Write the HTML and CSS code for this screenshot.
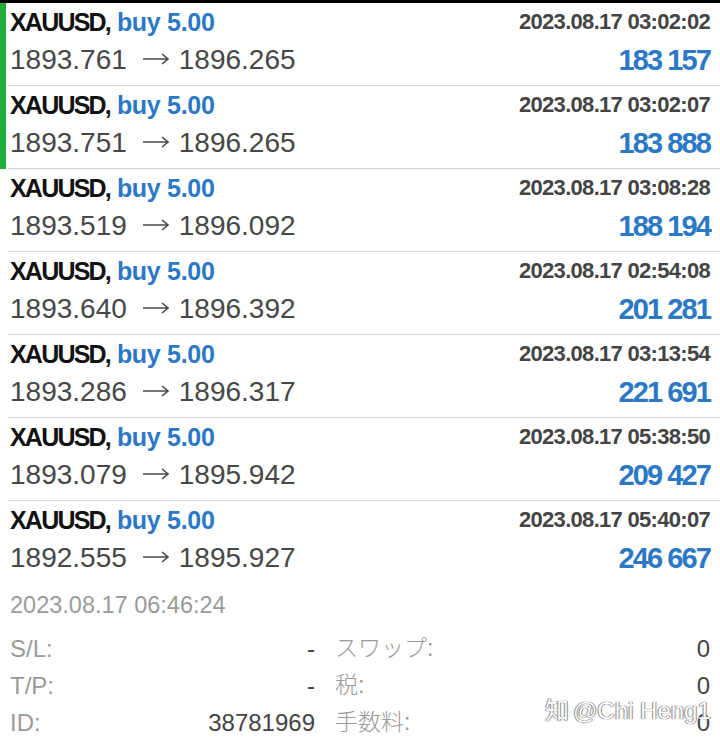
FILE: index.html
```html
<!DOCTYPE html>
<html lang="ja">
<head>
<meta charset="utf-8">
<title>XAUUSD history</title>
<link rel="stylesheet" href="styles.css">
</head>
<body>
<div class="topbar"></div>
<main class="trades">
  <div class="trade active">
    <div class="mark"></div>
    <div class="body">
      <div class="title"><span class="sym">XAUUSD,</span> <span class="side">buy 5.00</span></div>
      <div class="time">2023.08.17 03:02:02</div>
      <div class="prices">1893.761<svg class="arrow" viewBox="0 0 27 14" width="27" height="14"><path d="M1 7H26M20 2L26 7L20 12"/></svg>1896.265</div>
      <div class="profit">183 157</div>
    </div>
  </div>
  <div class="trade active">
    <div class="mark"></div>
    <div class="body">
      <div class="title"><span class="sym">XAUUSD,</span> <span class="side">buy 5.00</span></div>
      <div class="time">2023.08.17 03:02:07</div>
      <div class="prices">1893.751<svg class="arrow" viewBox="0 0 27 14" width="27" height="14"><path d="M1 7H26M20 2L26 7L20 12"/></svg>1896.265</div>
      <div class="profit">183 888</div>
    </div>
  </div>
  <div class="trade">
    <div class="mark"></div>
    <div class="body">
      <div class="title"><span class="sym">XAUUSD,</span> <span class="side">buy 5.00</span></div>
      <div class="time">2023.08.17 03:08:28</div>
      <div class="prices">1893.519<svg class="arrow" viewBox="0 0 27 14" width="27" height="14"><path d="M1 7H26M20 2L26 7L20 12"/></svg>1896.092</div>
      <div class="profit">188 194</div>
    </div>
  </div>
  <div class="trade">
    <div class="mark"></div>
    <div class="body">
      <div class="title"><span class="sym">XAUUSD,</span> <span class="side">buy 5.00</span></div>
      <div class="time">2023.08.17 02:54:08</div>
      <div class="prices">1893.640<svg class="arrow" viewBox="0 0 27 14" width="27" height="14"><path d="M1 7H26M20 2L26 7L20 12"/></svg>1896.392</div>
      <div class="profit">201 281</div>
    </div>
  </div>
  <div class="trade">
    <div class="mark"></div>
    <div class="body">
      <div class="title"><span class="sym">XAUUSD,</span> <span class="side">buy 5.00</span></div>
      <div class="time">2023.08.17 03:13:54</div>
      <div class="prices">1893.286<svg class="arrow" viewBox="0 0 27 14" width="27" height="14"><path d="M1 7H26M20 2L26 7L20 12"/></svg>1896.317</div>
      <div class="profit">221 691</div>
    </div>
  </div>
  <div class="trade">
    <div class="mark"></div>
    <div class="body">
      <div class="title"><span class="sym">XAUUSD,</span> <span class="side">buy 5.00</span></div>
      <div class="time">2023.08.17 05:38:50</div>
      <div class="prices">1893.079<svg class="arrow" viewBox="0 0 27 14" width="27" height="14"><path d="M1 7H26M20 2L26 7L20 12"/></svg>1895.942</div>
      <div class="profit">209 427</div>
    </div>
  </div>
  <div class="trade">
    <div class="mark"></div>
    <div class="body">
      <div class="title"><span class="sym">XAUUSD,</span> <span class="side">buy 5.00</span></div>
      <div class="time">2023.08.17 05:40:07</div>
      <div class="prices">1892.555<svg class="arrow" viewBox="0 0 27 14" width="27" height="14"><path d="M1 7H26M20 2L26 7L20 12"/></svg>1895.927</div>
      <div class="profit">246 667</div>
    </div>
  </div>
</main>
<section class="summary">
  <div class="close-time">2023.08.17 06:46:24</div>
  <div class="details">
    <span class="label">S/L:</span><span class="value">-</span>
    <span class="label jp">スワップ:</span><span class="value">0</span>
    <span class="label">T/P:</span><span class="value">-</span>
    <span class="label jp">税:</span><span class="value">0</span>
    <span class="label">ID:</span><span class="value">38781969</span>
    <span class="label jp">手数料:</span><span class="value">0</span>
  </div>
  <div class="watermark"><span class="wm-logo">知</span>@Chi Heng1</div>
</section>
</body>
</html>
```
FILE: styles.css
```css
html, body {
  margin: 0;
  padding: 0;
  background: #ffffff;
}
body {
  width: 720px;
  height: 755px;
  overflow: hidden;
  font-family: "Liberation Sans", Arial, sans-serif;
  color: #444444;
}
.topbar {
  height: 3px;
  background: #000000;
}
.trade {
  display: flex;
  height: 83px;
}
.mark {
  width: 6px;
  flex: none;
}
.trade.active .mark {
  background: #1fae3a;
}
.body {
  flex: 1;
  margin-left: 2px;
  padding: 0 10px 6px 2px;
  border-bottom: 1px solid #d4d4d4;
  display: grid;
  grid-template-columns: 1fr auto;
  grid-template-rows: 38px 38px;
}
.trade:last-child .body {
  border-bottom: none;
}
.title {
  font-size: 25px;
  line-height: 38px;
  font-weight: bold;
  white-space: nowrap;
}
.sym {
  color: #111111;
  letter-spacing: -1.8px;
}
.side {
  color: #2a78c6;
  letter-spacing: -0.3px;
}
.time {
  font-size: 22px;
  line-height: 38px;
  font-weight: bold;
  color: #444444;
  letter-spacing: -0.7px;
  text-align: right;
  white-space: nowrap;
}
.prices {
  font-size: 28px;
  line-height: 38px;
  color: #474747;
  white-space: nowrap;
}
.arrow {
  display: inline-block;
  width: 27px;
  height: 14px;
  margin: 0 10px 0 15px;
  vertical-align: 3px;
  fill: none;
  stroke: #4a4a4a;
  stroke-width: 1.6;
}
.profit {
  font-size: 29px;
  line-height: 38px;
  font-weight: bold;
  color: #2a78c6;
  letter-spacing: -1.9px;
  text-align: right;
  white-space: nowrap;
}
.summary {
  position: relative;
  padding: 6px 10px 0 10px;
}
.close-time {
  font-size: 23.5px;
  line-height: 30px;
  color: #9a9a9a;
  margin-bottom: 10px;
}
.details {
  display: grid;
  grid-template-columns: 80px 225px 1fr auto;
  grid-auto-rows: 37px;
  font-size: 24px;
  line-height: 37px;
}
.label {
  color: #9a9a9a;
}
.label.jp {
  padding-left: 20px;
  font-family: "Liberation Sans", "Noto Sans CJK JP", sans-serif;
  font-weight: 300;
  font-size: 23px;
}
.value {
  text-align: right;
  color: #444444;
}
.watermark {
  position: absolute;
  left: 545px;
  top: 110px;
  font-size: 24px;
  line-height: 30px;
  color: #ffffff;
  white-space: nowrap;
  text-shadow: 0 0 1px #666, 0 0 1px #666, 1px 0 0 #aaa, -1px 0 0 #aaa;
}
.wm-logo {
  font-family: "Noto Sans CJK SC", sans-serif;
  margin-right: 4px;
}
```
